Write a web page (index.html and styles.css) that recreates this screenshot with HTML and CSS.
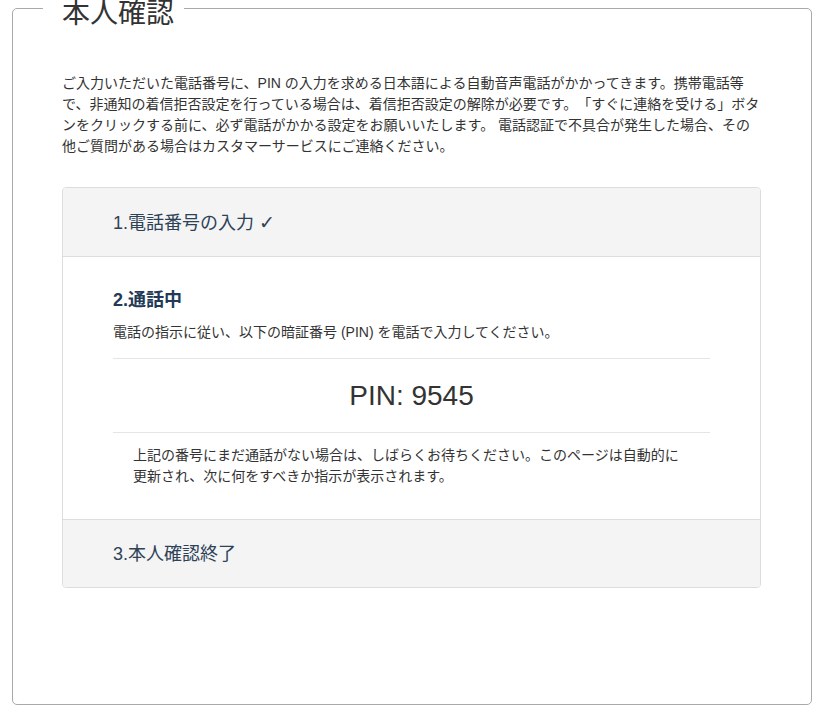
FILE: index.html
```html
<!DOCTYPE html>
<html lang="ja">
<head>
<meta charset="utf-8">
<title>本人確認</title>
<link rel="stylesheet" href="styles.css">
</head>
<body>
<fieldset class="verify">
  <legend class="verify-title">本人確認</legend>
  <p class="intro">ご入力いただいた電話番号に、PIN の入力を求める日本語による自動音声電話がかかってきます。携帯電話等<br>で、非通知の着信拒否設定を行っている場合は、着信拒否設定の解除が必要です。「すぐに連絡を受ける」ボタ<br>ンをクリックする前に、必ず電話がかかる設定をお願いいたします。 電話認証で不具合が発生した場合、その<br>他ご質問がある場合はカスタマーサービスにご連絡ください。</p>
  <div class="panel">
    <div class="panel-heading">1.電話番号の入力 <span class="check">✓</span></div>
    <div class="panel-body">
      <h4 class="step-title">2.通話中</h4>
      <p class="step-text">電話の指示に従い、以下の暗証番号 (PIN) を電話で入力してください。</p>
      <div class="pin">PIN: 9545</div>
      <p class="wait-text">上記の番号にまだ通話がない場合は、しばらくお待ちください。このページは自動的に更新され、次に何をすべきか指示が表示されます。</p>
    </div>
    <div class="panel-heading panel-heading-last">3.本人確認終了</div>
  </div>
</fieldset>
</body>
</html>
```
FILE: styles.css
```css
html, body {
  margin: 0;
  padding: 0;
  background: #fff;
}
body {
  padding-left: 12px;
  font-family: "Liberation Sans", "Noto Sans CJK JP", sans-serif;
  font-size: 14px;
  color: #333;
  text-spacing-trim: space-all;
}
.verify {
  box-sizing: border-box;
  width: 800px;
  height: 705px;
  margin: 0;
  padding: 57px 50px 0 49px;
  border: 1px solid #a9a9a9;
  border-radius: 5px;
}
.verify-title {
  margin-left: -19px;
  padding: 12px 10px 0 19px;
  font-size: 28px;
  line-height: 4px;
  font-weight: normal;
  color: #333;
}
.intro {
  margin: 0 0 30px;
  line-height: 21px;
  white-space: nowrap;
}
.panel {
  border: 1px solid #ddd;
  border-radius: 4px;
  overflow: hidden;
}
.panel-heading {
  background: #f4f4f4;
  padding: 24px 50px 23px;
  font-size: 18px;
  line-height: 20px;
  color: #2e4257;
  border-bottom: 1px solid #ddd;
}
.panel-heading-last {
  border-bottom: 0;
  border-top: 1px solid #ddd;
}
.check {
  font-family: "DejaVu Sans", sans-serif;
  font-size: 19px;
}
.panel-body {
  padding: 33px 50px 32px;
}
.step-title {
  margin: 0 0 12px;
  font-size: 18px;
  line-height: 20px;
  font-weight: bold;
  color: #223a55;
}
.step-text {
  margin: 0;
  line-height: 21px;
  padding-bottom: 15px;
  border-bottom: 1px solid #e5e5e5;
}
.pin {
  padding: 20px 0;
  font-size: 28px;
  line-height: 33px;
  text-align: center;
  color: #333;
  border-bottom: 1px solid #e5e5e5;
}
.wait-text {
  margin: 12px 0 0;
  padding: 0 20px;
  line-height: 21px;
}
```
